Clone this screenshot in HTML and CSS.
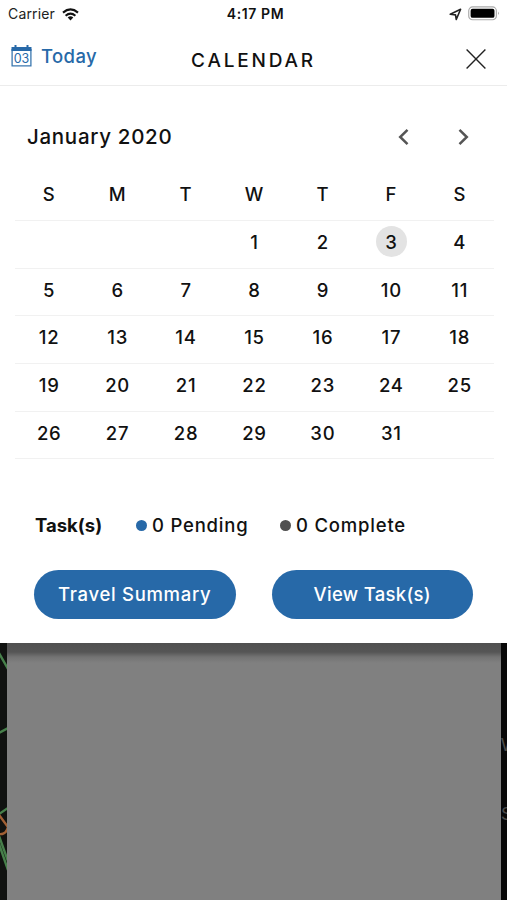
FILE: index.html
```html
<!DOCTYPE html>
<html lang="en">
<head>
<meta charset="utf-8">
<title>Calendar</title>
<link rel="stylesheet" href="styles.css">
</head>
<body>
<main class="screen">
  <section class="sheet">
    <div class="status">
      <div class="carrier"><span>Carrier</span>
        <svg class="wifi" viewBox="0 0 17 13"><g fill="none" stroke="#111" stroke-width="2.1"><path d="M1 4.6Q8.5-1.8 16 4.6M3.6 7.7Q8.5 3.4 13.4 7.7"/></g><path fill="#111" d="M5.7 9.4Q8.5 7.2 11.3 9.4L8.5 12.4Z"/></svg>
      </div>
      <span class="clock">4:17 PM</span>
      <div class="power">
        <svg class="locate" viewBox="0 0 12 12"><path d="M1.2 5.8L10.7 1.2L6.7 10.6L6 6.3Z" fill="none" stroke="#222" stroke-width="1.5" stroke-linejoin="round"/></svg>
        <svg class="battery" viewBox="0 0 33 15"><rect x=".75" y=".75" width="28.5" height="13.2" rx="4" fill="#fff" stroke="#aaa" stroke-width="1.2"/><rect x="2.7" y="2.7" width="24.6" height="9.3" rx="2" fill="#000"/><path d="M31 5.5Q32.8 7.3 31 9.1Z" fill="#999"/></svg>
      </div>
    </div>
    <header class="bar">
      <div class="today">
        <svg class="cal-icon" viewBox="0 0 21 22"><path d="M1.1 4V20.9H19.9V4" fill="none" stroke="#3a77af" stroke-width="1.3"/><path d="M.5 2H20.5V6H.5Z" fill="#2769a8"/><path d="M4.5 0V3M16.5 0V3" stroke="#2769a8" stroke-width="2"/><text class="cal-num" x="10.5" y="18" text-anchor="middle">03</text></svg>
        <span class="today-label">Today</span>
      </div>
      <h1 class="title">CALENDAR</h1>
      <svg class="close" viewBox="0 0 20 20"><path d="M.6.6L19.4 19.4M19.4.6L.6 19.4" stroke="#222" stroke-width="1.4"/></svg>
    </header>
    <div class="month">
      <h2 class="month-name">January 2020</h2>
      <div class="arrows">
        <svg viewBox="0 0 11 18"><path d="M9.5 1.8L2.2 9L9.5 16.2" /></svg>
        <svg viewBox="0 0 11 18"><path d="M1.5 1.8L8.8 9L1.5 16.2" /></svg>
      </div>
    </div>
    <div class="calendar">
      <div class="week days"><span>S</span><span>M</span><span>T</span><span>W</span><span>T</span><span>F</span><span>S</span></div>
      <div class="week"><span></span><span></span><span></span><span>1</span><span>2</span><span class="current">3</span><span>4</span></div>
      <div class="week"><span>5</span><span>6</span><span>7</span><span>8</span><span>9</span><span>10</span><span>11</span></div>
      <div class="week"><span>12</span><span>13</span><span>14</span><span>15</span><span>16</span><span>17</span><span>18</span></div>
      <div class="week"><span>19</span><span>20</span><span>21</span><span>22</span><span>23</span><span>24</span><span>25</span></div>
      <div class="week"><span>26</span><span>27</span><span>28</span><span>29</span><span>30</span><span>31</span><span></span></div>
    </div>
    <div class="tasks">
      <strong class="task-label">Task(s)</strong>
      <div class="count pending"><i></i><span>0 Pending</span></div>
      <div class="count complete"><i></i><span>0 Complete</span></div>
    </div>
    <div class="actions">
      <button class="travel">Travel Summary</button>
      <button class="view">View Task(s)</button>
    </div>
  </section>
  <section class="backdrop">
    <svg class="edge" viewBox="0 0 7 257"><g fill="none"><path d="M-1 10L8 26M-1 90L8 85M-1 171L8 165M-1 193L8 218M-1 201L8 227" stroke="#47804b" stroke-width="2.4"/><path d="M-1 172L8 184M-1 191Q6 192 8 184" stroke="#a06035" stroke-width="2.4"/></g></svg>
    <div class="dim"></div>
    <div class="edge right"><span>W</span><span>S</span></div>
  </section>
</main>
</body>
</html>
```
FILE: styles.css
```css
* { box-sizing: border-box; }
body { margin: 0; background: #101010; color: #111; font-family: Inter, "Open Sans", sans-serif; font-weight: 500; }
h1, h2 { margin: 0; font-weight: 500; }
svg { display: block; flex: none; }
.screen { width: 507px; height: 900px; display: flex; flex-direction: column; overflow: hidden; }
.sheet { height: 643px; background: #fff; display: flex; flex-direction: column; flex: none; }
.status { height: 28px; display: grid; grid-template-columns: 1fr auto 1fr; align-items: center; padding: 0 7px 0 8px; font-size: 14px; line-height: 20px; }
.carrier { display: flex; align-items: center; gap: 7px; font-weight: 400; color: #222; letter-spacing: .15px; }
.wifi { width: 17px; height: 13px; }
.clock { font-weight: 600; font-size: 14px; letter-spacing: .6px; padding-left: 3px; }
.power { display: flex; justify-content: flex-end; align-items: center; gap: 6px; }
.locate { width: 13px; height: 13px; }
.battery { width: 32px; height: 15px; margin-top: -2px; }
.bar { height: 58px; border-bottom: 1px solid #ececec; display: grid; grid-template-columns: 1fr auto 1fr; align-items: center; padding: 5px 21px 0 11px; }
.today { display: flex; gap: 9px; align-items: center; color: #2769a8; padding-bottom: 6px; }
.cal-icon { width: 21px; height: 22px; }
.cal-num { font: 400 12.5px Inter, sans-serif; fill: #2769a8; }
.today-label { font-size: 18.5px; letter-spacing: .4px; line-height: 24px; }
.title { font-size: 19px; letter-spacing: 2.8px; line-height: 24px; padding: 3px 0 0 10px; }
.close { width: 20px; height: 20px; justify-self: end; }
.month { height: 82px; display: flex; justify-content: space-between; padding: 37px 38px 0 27px; }
.month-name { font-size: 20.5px; letter-spacing: .7px; line-height: 28px; }
.arrows { display: flex; gap: 49px; padding-top: 5px; }
.arrows svg { width: 11px; height: 18px; fill: none; stroke: #555; stroke-width: 2.5; }
.calendar { margin: 0 13px 0 15px; }
.week { display: grid; grid-template-columns: repeat(7, 1fr); height: 47.7px; border-bottom: 1px solid #f1f1f1; font-size: 18.5px; letter-spacing: .8px; align-items: center; justify-items: center; padding-bottom: 5px; }
.days { height: 53px; padding: 0; }
.week .current { width: 31px; height: 31px; border-radius: 50%; background: #e3e3e3; display: grid; place-items: center; }
.tasks { height: 32px; margin-top: 50px; padding-left: 35px; display: flex; align-items: center; font-size: 18.5px; line-height: 24px; }
.task-label { width: 101px; font-weight: 700; }
.count { display: flex; align-items: center; gap: 5px; letter-spacing: .8px; }
.count i { width: 11px; height: 11px; border-radius: 50%; background: #2769a8; }
.pending { width: 144px; }
.complete i { background: #505050; }
.actions { display: flex; gap: 36px; padding: 29px 34px 0; }
button { width: 202px; height: 49px; border: 0; border-radius: 25px; background: #2769a8; color: #fff; font: 500 18.5px/24px Inter, sans-serif; padding: 0 0 2px; white-space: nowrap; }
.travel { letter-spacing: .7px; }
.view { letter-spacing: .3px; }
.backdrop { flex: 1; display: grid; grid-template-columns: 7px 1fr 6px; background: #111; }
.edge { width: 7px; height: 257px; overflow: hidden; background: #101210; }
.dim { background: linear-gradient(#505050 0, #555 9px, #737373 14px, #808080 20px); }
.right { width: 6px; background: #080808; color: #4a4a4a; font: 18px/22px "Liberation Sans", sans-serif; display: flex; flex-direction: column; padding-top: 91px; gap: 47px; }
```
